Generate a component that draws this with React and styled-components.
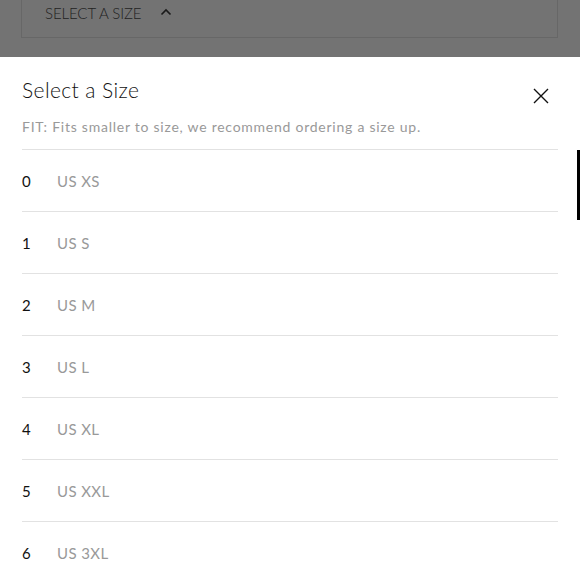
import React from 'react';
import styled, { createGlobalStyle } from 'styled-components';

const GlobalStyle = createGlobalStyle`
    html, body {
        margin: 0;
        padding: 0;
        background: #ffffff;
        font-family: Lato, "Liberation Sans", sans-serif;
    }
`;

const sizes = [
    { num: '0', label: 'US XS' },
    { num: '1', label: 'US S' },
    { num: '2', label: 'US M' },
    { num: '3', label: 'US L' },
    { num: '4', label: 'US XL' },
    { num: '5', label: 'US XXL' },
    { num: '6', label: 'US 3XL' },
];

export default function App() {
    return (
        <>
            <GlobalStyle />
            <Page>
                <Backdrop>
                    <Dropdown>
                        <span>SELECT A SIZE</span>
                        <svg width="12" height="8" viewBox="0 0 12 8">
                            <path d="M1.5 6.5 L6 2 L10.5 6.5" fill="none" stroke="#1a1a1a" strokeWidth="1.6" />
                        </svg>
                    </Dropdown>
                </Backdrop>
                <Sheet>
                    <Header>
                        <Title>Select a Size</Title>
                        <CloseButton aria-label="close">
                            <svg width="16" height="16" viewBox="0 0 16 16">
                                <path d="M1 1 L15 15 M15 1 L1 15" stroke="#111" strokeWidth="1.4" />
                            </svg>
                        </CloseButton>
                    </Header>
                    <Fit>FIT: Fits smaller to size, we recommend ordering a size up.</Fit>
                    <List>
                        {sizes.map((s) => (
                            <Row key={s.num}>
                                <Num>{s.num}</Num>
                                <Label>{s.label}</Label>
                            </Row>
                        ))}
                    </List>
                    <Thumb />
                </Sheet>
            </Page>
        </>
    );
}

const Page = styled.div`
    width: 580px;
    height: 580px;
    overflow: hidden;
    display: flex;
    flex-direction: column;
`;

const Backdrop = styled.div`
    height: 57px;
    background: #737373;
    padding: 0 22px 0 21px;
    box-sizing: border-box;
    flex-shrink: 0;
`;

const Dropdown = styled.div`
    height: 38px;
    border: 1px solid #676767;
    border-top: none;
    box-sizing: border-box;
    display: flex;
    align-items: center;
    gap: 19px;
    padding: 0 0 11px 23px;
    color: #222;
    font-size: 15px;
    font-weight: 300;
    letter-spacing: -0.1px;
    svg {
        margin-top: -2px;
    }
`;

const Sheet = styled.div`
    position: relative;
    flex: 1;
    background: #fff;
    padding: 0 22px;
`;

const Header = styled.div`
    display: flex;
    justify-content: space-between;
    align-items: center;
    padding-top: 19px;
`;

const Title = styled.h2`
    margin: 0;
    font-size: 21px;
    font-weight: 300;
    color: #111;
    letter-spacing: 0.4px;
    line-height: 28px;
`;

const CloseButton = styled.button`
    border: none;
    background: none;
    padding: 0;
    margin: 11px 9px 0 0;
    width: 16px;
    height: 16px;
    display: flex;
`;

const Fit = styled.p`
    margin: 14px 0 0;
    font-size: 14px;
    font-weight: 400;
    color: #999;
    letter-spacing: 0.75px;
    line-height: 18px;
`;

const List = styled.div`
    margin-top: 13px;
`;

const Row = styled.div`
    height: 62px;
    border-top: 1px solid #e2e2e2;
    box-sizing: border-box;
    display: flex;
    align-items: center;
    font-size: 15px;
`;

const Num = styled.span`
    width: 35px;
    color: #111;
`;

const Label = styled.span`
    color: #999;
    font-weight: 400;
    letter-spacing: 0.4px;
`;

const Thumb = styled.div`
    position: absolute;
    right: 0;
    top: 93px;
    width: 3px;
    height: 70px;
    background: #000;
`;
